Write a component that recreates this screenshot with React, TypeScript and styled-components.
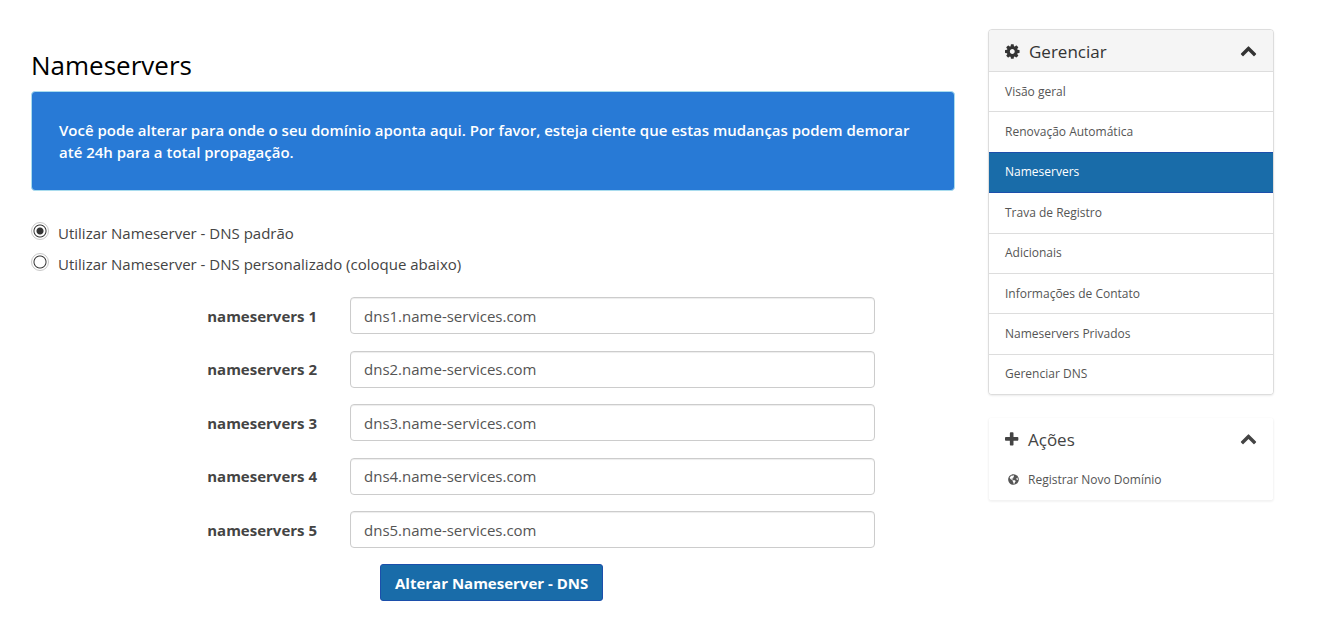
import React, { useState } from "react";
import styled, { createGlobalStyle } from "styled-components";
import { FaGlobeAmericas } from "react-icons/fa";

const GlobalStyle = createGlobalStyle`
  *, *::before, *::after { box-sizing: border-box; }
  body {
    margin: 0;
    background: #fff;
    color: #444;
    font-family: "Open Sans", "Noto Sans", sans-serif;
    font-size: 15px;
    line-height: 22px;
  }
`;

const Page = styled.div`
  display: grid;
  grid-template-columns: minmax(0, 1fr) 286px;
  gap: 33px;
  align-items: start;
  padding: 29px 47px 29px 31px;

  @media (max-width: 800px) {
    grid-template-columns: minmax(0, 1fr);
  }
`;

const Main = styled.main`
  padding-top: 18px;
`;

const Title = styled.h1`
  margin: 0 0 8px;
  color: #000;
  font-size: 26px;
  font-weight: 400;
  line-height: 36px;
`;

const Notice = styled.p`
  margin: 0 0 31px;
  padding: 27px;
  border: 1px solid #a9dcee;
  border-radius: 4px;
  background: #287ad6;
  color: #fff;
  font-weight: 600;
`;

const Choice = styled.label`
  display: flex;
  align-items: center;
  gap: 9px;
  margin-bottom: 9px;
`;

const Radio = styled.input`
  appearance: none;
  flex: none;
  width: 18px;
  height: 18px;
  margin: 0 0 4px;
  border: 1px solid #c8c8c8;
  border-radius: 50%;
  background: radial-gradient(circle, #fff 5px, #333 6px, #333 6px, #fff 7px);

  &:checked {
    background: radial-gradient(circle, #333 3px, #fff 4px, #fff 5px, #333 6px, #333 6px, #fff 7px);
  }
`;

const Fields = styled.div`
  display: flex;
  flex-direction: column;
  justify-content: space-between;
  min-height: 251px;
  margin: 22px 80px 16px 0;
`;

const Field = styled.div`
  display: grid;
  grid-template-columns: minmax(120px, 286fr) minmax(0, 525fr);
  gap: 33px;
  align-items: center;
`;

const FieldLabel = styled.label`
  font-weight: 700;
  text-align: right;
`;

const TextInput = styled.input`
  width: 100%;
  height: 37px;
  padding: 6px 13px;
  border: 1px solid #ccc;
  border-radius: 4px;
  background: #fff;
  box-shadow: inset 0 1px 1px rgba(0, 0, 0, 0.075);
  color: #555;
  font: inherit;
`;

const Actions = styled.div`
  display: grid;
  grid-template-columns: 349fr 575fr;
`;

const SubmitButton = styled.button`
  grid-column: 2;
  justify-self: start;
  height: 37px;
  padding: 0 14px;
  border: 1px solid #1c4fab;
  border-radius: 3px;
  background: #196ca9;
  color: #fff;
  font: inherit;
  font-weight: 700;
  white-space: nowrap;
`;

const Sidebar = styled.aside`
  display: flex;
  flex-direction: column;
  gap: 22px;
`;

const Panel = styled.section<{ $plain?: boolean }>`
  overflow: hidden;
  border: 1px solid ${(p) => (p.$plain ? "transparent" : "#ddd")};
  border-radius: 4px;
  background: #fff;
  background-clip: padding-box;
  box-shadow: 0 1px 2px rgba(0, 0, 0, ${(p) => (p.$plain ? 0.05 : 0.08)});
`;

const PanelHeader = styled.button<{ $plain?: boolean }>`
  display: flex;
  align-items: center;
  gap: 8px;
  width: 100%;
  height: 42px;
  padding: 2px 16px 0 16px;
  border: 0;
  border-bottom: 1px solid ${(p) => (p.$plain ? "transparent" : "#ddd")};
  background: ${(p) => (p.$plain ? "#fff" : "#f5f5f5")};
  color: ${(p) => (p.$plain ? "#444" : "#333")};
  font: inherit;
  font-size: 17px;
  text-align: left;
`;

const HeaderText = styled.span`
  flex: 1;
`;

const Menu = styled.nav`
  display: grid;
  grid-auto-rows: 1fr;
  min-height: 323px;
  margin-bottom: -1px;
`;

const MenuLink = styled.a<{ $active?: boolean }>`
  display: flex;
  align-items: center;
  gap: 9px;
  padding: 0 16px;
  border: 0 solid ${(p) => (p.$active ? "#1c4fab" : "#ddd")};
  border-width: ${(p) => (p.$active ? "1px 0" : "0 0 1px")};
  margin-top: ${(p) => (p.$active ? "-1px" : "0")};
  color: ${(p) => (p.$active ? "#fff" : "#555")};
  background: ${(p) => (p.$active ? "#196ca9" : "#fff")};
  font-size: 12px;
  text-decoration: none;

  &:last-child {
    border-bottom-color: transparent;
  }
`;

const ActionLink = styled(MenuLink)`
  height: 40px;
  padding: 0 19px;
`;

const Glyph = styled.svg`
  flex: none;
  fill: currentColor;
`;

const COG =
  "M1152 896q0-106-75-181t-181-75-181 75-75 181 75 181 181 75 181-75 75-181zm512-109v222q0 12-8 23t-20 13l-185 28q-19 54-39 91 35 50 107 138 10 12 10 25t-9 23q-27 37-99 108t-94 71q-12 0-26-9l-138-108q-44 23-91 38-16 136-29 186-7 28-36 28h-222q-14 0-24.5-8.5t-11.5-21.5l-28-184q-49-16-90-37l-141 107q-10 9-25 9-14 0-25-11-126-114-165-168-7-10-7-23 0-12 8-23 15-21 51-66.5t54-70.5q-27-50-41-99l-183-27q-13-2-21-12.5t-8-23.5v-222q0-12 8-23t19-13l186-28q14-46 39-92-40-57-107-138-10-12-10-24 0-10 9-23 26-36 98.5-107.5t94.5-71.5q13 0 26 10l138 107q44-23 91-38 16-136 29-186 7-28 36-28h222q14 0 24.5 8.5t11.5 21.5l28 184q49 16 90 37l142-107q9-9 24-9 13 0 25 10 129 119 165 170 7 8 7 22 0 12-8 23-15 21-51 66.5t-54 70.5q26 50 41 98l183 28q13 2 21 12.5t8 23.5z";
const PLUS =
  "M1600 736v192q0 40-28 68t-68 28h-416v416q0 40-28 68t-68 28h-192q-40 0-68-28t-28-68v-416h-416q-40 0-68-28t-28-68v-192q0-40 28-68t68-28h416v-416q0-40 28-68t68-28h192q40 0 68 28t28 68v416h416q40 0 68 28t28 68z";
const CHEVRON_UP =
  "M1683 1331l-166 165q-19 19-45 19t-45-19l-531-531-531 531q-19 19-45 19t-45-19l-166-165q-19-19-19-45.5t19-45.5l742-741q19-19 45-19t45 19l742 741q19 19 19 45.5t-19 45.5z";

const Chevron = () => (
  <Glyph width="17" height="17" viewBox="0 128 1792 1792" aria-hidden="true">
    <path d={CHEVRON_UP} />
  </Glyph>
);

const menuItems = [
  "Visão geral",
  "Renovação Automática",
  "Nameservers",
  "Trava de Registro",
  "Adicionais",
  "Informações de Contato",
  "Nameservers Privados",
  "Gerenciar DNS",
];

export default function App() {
  const [mode, setMode] = useState("default");
  const [servers, setServers] = useState(
    [1, 2, 3, 4, 5].map((n) => `dns${n}.name-services.com`)
  );

  return (
    <>
      <GlobalStyle />
      <Page>
        <Main>
          <Title>Nameservers</Title>
          <Notice>
            Você pode alterar para onde o seu domínio aponta aqui. Por favor, esteja ciente que
            estas mudanças podem demorar até 24h para a total propagação.
          </Notice>
          <form onSubmit={(e) => e.preventDefault()}>
            <Choice>
              <Radio
                type="radio"
                name="mode"
                checked={mode === "default"}
                onChange={() => setMode("default")}
              />
              Utilizar Nameserver - DNS padrão
            </Choice>
            <Choice>
              <Radio
                type="radio"
                name="mode"
                checked={mode === "custom"}
                onChange={() => setMode("custom")}
              />
              Utilizar Nameserver - DNS personalizado (coloque abaixo)
            </Choice>
            <Fields>
              {servers.map((value, i) => (
                <Field key={i}>
                  <FieldLabel htmlFor={`ns${i + 1}`}>nameservers {i + 1}</FieldLabel>
                  <TextInput
                    id={`ns${i + 1}`}
                    type="text"
                    value={value}
                    onChange={(e) =>
                      setServers(servers.map((s, j) => (j === i ? e.target.value : s)))
                    }
                  />
                </Field>
              ))}
            </Fields>
            <Actions>
              <SubmitButton type="submit">Alterar Nameserver - DNS</SubmitButton>
            </Actions>
          </form>
        </Main>
        <Sidebar>
          <Panel>
            <PanelHeader type="button" aria-expanded="true">
              <Glyph width="16" height="17" viewBox="128 0 1687 1792" aria-hidden="true">
                <path d={COG} />
              </Glyph>
              <HeaderText>Gerenciar</HeaderText>
              <Chevron />
            </PanelHeader>
            <Menu>
              {menuItems.map((item) => (
                <MenuLink
                  key={item}
                  href="#"
                  $active={item === "Nameservers"}
                  aria-current={item === "Nameservers" ? "page" : undefined}
                >
                  {item}
                </MenuLink>
              ))}
            </Menu>
          </Panel>
          <Panel $plain>
            <PanelHeader type="button" aria-expanded="true" $plain>
              <Glyph width="15" height="17" viewBox="192 0 1581 1792" aria-hidden="true">
                <path d={PLUS} />
              </Glyph>
              <HeaderText>Ações</HeaderText>
              <Chevron />
            </PanelHeader>
            <ActionLink href="#">
              <FaGlobeAmericas size={11} aria-hidden="true" />
              Registrar Novo Domínio
            </ActionLink>
          </Panel>
        </Sidebar>
      </Page>
    </>
  );
}
